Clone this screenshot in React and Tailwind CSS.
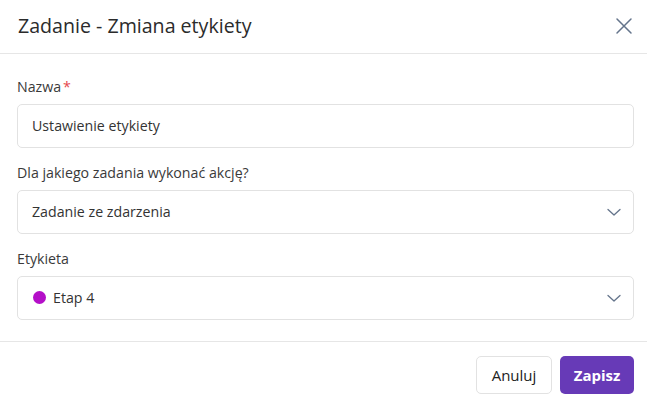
import React from "react";

function Chevron() {
  return (
    <svg width="16" height="16" viewBox="0 0 16 16" fill="none" className="text-[#64748b]">
      <path d="M2 5.5 L8 11 L14 5.5" stroke="currentColor" strokeWidth="1.3" strokeLinecap="round" strokeLinejoin="round" />
    </svg>
  );
}

export default function App() {
  return (
    <div className="w-[647px] h-[405px] bg-white flex flex-col" style={{ fontFamily: '"Open Sans", sans-serif' }}>
      <div className="h-[54px] border-b border-[#e6e6e6] flex items-center justify-between pl-[18px] pr-[14px] shrink-0">
        <div className="text-[19.6px] text-[#2b2b2b] leading-none -mt-[1px]">Zadanie - Zmiana etykiety</div>
        <svg width="18" height="18" viewBox="0 0 18 18" fill="none" className="text-[#64748b] -mt-[2px]">
          <path d="M2 2 L16 16 M16 2 L2 16" stroke="currentColor" strokeWidth="1.5" strokeLinecap="round" />
        </svg>
      </div>
      <div className="flex-1 flex flex-col pl-[17px] pr-[13px] pt-[23px]">
        <div className="text-[14.2px] leading-[20px] text-[#3a3a3a]">
          Nazwa<span className="text-[#e5484d] ml-[2px]">*</span>
        </div>
        <div className="mt-[7px] h-[44px] border border-[#e2e2e2] rounded-[5px] flex items-center px-[14px] text-[14.2px] text-[#333]">
          Ustawienie etykiety
        </div>
        <div className="mt-[15px] text-[14.2px] leading-[20px] text-[#3a3a3a]">Dla jakiego zadania wykonać akcję?</div>
        <div className="mt-[7px] h-[44px] border border-[#e2e2e2] rounded-[5px] flex items-center justify-between pl-[14px] pr-[11px] text-[14.2px] text-[#333]">
          <span>Zadanie ze zdarzenia</span>
          <Chevron />
        </div>
        <div className="mt-[15px] text-[14.2px] leading-[20px] text-[#3a3a3a]">Etykieta</div>
        <div className="mt-[7px] h-[44px] border border-[#e2e2e2] rounded-[5px] flex items-center justify-between pl-[15px] pr-[11px] text-[14.2px] text-[#333]">
          <span className="flex items-center gap-[7px]">
            <span className="w-[13px] h-[13px] rounded-full bg-[#b40fc8] inline-block" />
            Etap 4
          </span>
          <Chevron />
        </div>
      </div>
      <div className="h-[64px] border-t border-[#e6e6e6] flex items-start justify-end gap-[8px] pr-[13px] pt-[14px] shrink-0">
        <button className="h-[38px] w-[76px] border border-[#e2e2e2] rounded-[5px] bg-white text-[15px] text-[#222]">Anuluj</button>
        <button className="h-[38px] w-[74px] rounded-[5px] bg-[#673ab7] text-[15px] font-bold text-white">Zapisz</button>
      </div>
    </div>
  );
}
